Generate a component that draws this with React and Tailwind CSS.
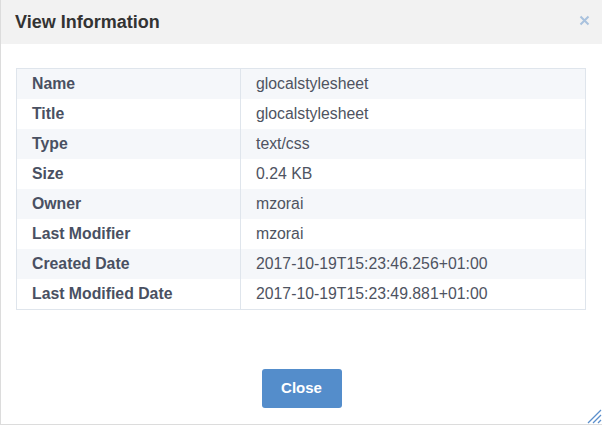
import React from "react";

const rows = [
  ["Name", "glocalstylesheet"],
  ["Title", "glocalstylesheet"],
  ["Type", "text/css"],
  ["Size", "0.24 KB"],
  ["Owner", "mzorai"],
  ["Last Modifier", "mzorai"],
  ["Created Date", "2017-10-19T15:23:46.256+01:00"],
  ["Last Modified Date", "2017-10-19T15:23:49.881+01:00"],
];

export default function App() {
  return (
    <div
      className="relative w-[602px] h-[425px] bg-white border-l border-b border-[#dcdcdc] overflow-hidden"
      style={{ fontFamily: '"Liberation Sans", Arial, sans-serif' }}
    >
      <div className="h-[44px] bg-[#f2f2f2] flex items-center justify-between pl-[14px] pr-[12px]">
        <span className="text-[18px] font-bold text-[#333]">View Information</span>
        <svg width="11" height="11" viewBox="0 0 11 11" className="mt-[-4px]">
          <path d="M1.5 1.5 L9.5 9.5 M9.5 1.5 L1.5 9.5" stroke="#a9c2de" strokeWidth="2" />
        </svg>
      </div>
      <div className="pt-[24px] px-[15px]">
        <div className="border border-[#dfe5ec] w-[570px]">
          {rows.map(([k, v], i) => (
            <div
              key={k}
              className={`flex h-[30px] items-center text-[15.8px] ${i % 2 === 0 ? "bg-[#f5f7fa]" : "bg-white"}`}
            >
              <div className="w-[224px] h-full flex items-center pl-[15px] border-r border-[#dfe5ec] font-bold text-[#495062]">
                {k}
              </div>
              <div className="flex-1 pl-[15px] text-[#4e5361]">{v}</div>
            </div>
          ))}
        </div>
      </div>
      <div className="flex justify-center pt-[59px]">
        <button className="w-[80px] h-[39px] rounded-[3px] bg-[#548dcb] text-white text-[15px] font-bold">
          Close
        </button>
      </div>
      <svg className="absolute right-0 bottom-0" width="16" height="16" viewBox="0 0 16 16">
        <line x1="2" y1="15" x2="15" y2="2" stroke="#5b8fcc" strokeWidth="1.2" />
        <line x1="7" y1="15" x2="15" y2="7" stroke="#5b8fcc" strokeWidth="1.2" />
        <line x1="12" y1="15" x2="15" y2="12" stroke="#5b8fcc" strokeWidth="1.2" />
      </svg>
    </div>
  );
}
